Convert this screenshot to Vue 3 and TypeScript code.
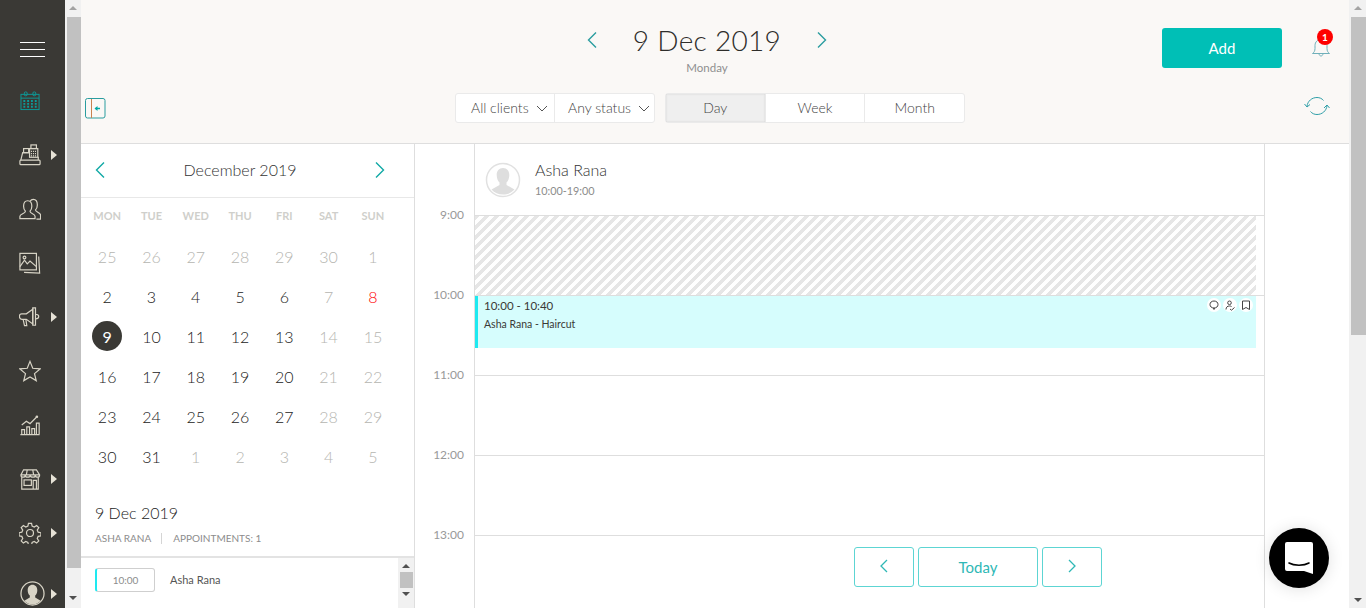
<template>
  <div class="app">
    <aside class="nav">
      <div class="nav__menu">
        <span></span><span></span><span></span>
      </div>
      <div class="nav__item nav__item--active">
        <svg width="21" height="20" viewBox="0 0 22 21" fill="none" stroke="currentColor">
          <rect x="1" y="3.5" width="19" height="16" />
          <path d="M1 7.5h19" />
          <rect x="4.500" y="1" width="3" height="4" rx="1.200" />
          <rect x="13.500" y="1" width="3" height="4" rx="1.200" />
          <path stroke-width="2" stroke-dasharray="2 2" d="M3.500 10.500h15M3.500 13.500h15M3.500 16.500h15" />
        </svg>
      </div>
      <div v-for="item in navItems" :key="item.name" class="nav__item">
        <svg width="22" height="22" viewBox="0 0 24 24" fill="none" stroke="currentColor" stroke-width="1.300">
          <template v-if="item.name === 'till'">
            <rect x="1" y="17.500" width="22" height="5" rx="1" />
            <path d="M2 17.500l2-8h7M21 14v3.500" />
            <rect x="5" y="5" width="5.500" height="4.500" />
            <rect x="13" y="1" width="6" height="4" />
            <rect x="11.500" y="5" width="9" height="9.500" />
            <path d="M13 8h6M13 10.500h6M13 13h6" stroke-dasharray="1.200 1" />
          </template>
          <template v-else-if="item.name === 'clients'">
            <path d="M1 22.500v-2.500c0-2.500 6-3 6-5.500-1.500-1.500-2-3-2-5.500 0-3 1.500-6 4.500-6s4.500 3 4.500 6c0 2.500-.5 4-2 5.500 0 2.500 5.500 3 5.500 5.500v2.500z" />
            <path d="M12 3.500c1-1.500 2.500-2 3.500-2 3 0 4.500 3 4.500 6 0 2.500-.5 4-2 5.500 0 2 5.500 3 5.500 5.500v4.500h-4.500" />
          </template>
          <template v-else-if="item.name === 'gallery'">
            <rect x="1" y="1.500" width="18" height="18" />
            <path d="M1 16l5-7 3 4 3-3 7 6" />
            <circle cx="6" cy="6" r="1.500" />
            <path d="M21.500 5l1 18-17-.8" />
          </template>
          <template v-else-if="item.name === 'marketing'">
            <path d="M15 3.500l-7 5h-5c-1.500 0-2.500 1-2.500 3s1 3 2.500 3h5l7 5z" />
            <path d="M15 2v19h3v-19zM18 9c2 0 3.500 1 3.500 2.500s-1.500 2.500-3.500 2.500" />
            <path d="M4.500 14.500l1.500 7h2.500l-1-7" />
          </template>
          <template v-else-if="item.name === 'reviews'">
            <path d="M12 1.500l3 7.500 8 .7-6.100 5.200 1.900 7.600-6.800-4.100-6.800 4.100 1.900-7.600-6.100-5.200 8-.7z" />
          </template>
          <template v-else-if="item.name === 'reports'">
            <path d="M1.500 22.500h21M3 22v-5h3v5M8.500 22v-8h3v8M14 22v-6h3v6M19 22v-12h3v12" />
            <path d="M3 12l5-4 4 2.500 7-7" />
            <circle cx="19.500" cy="3" r=".8" fill="currentColor" />
          </template>
          <template v-else-if="item.name === 'shop'">
            <path d="M3 10v13h18v-13" />
            <path d="M5 2h14l3.500 5.500c0 1.500-1 2.500-2.200 2.500-1.300 0-2.500-1-2.500-2.500 0 1.500-1 2.500-2.500 2.500s-3-1-3-2.500c0 1.500-1.500 2.500-3 2.500s-2.500-1-2.500-2.500c0 1.500-1.200 2.500-2.500 2.500-1.200 0-2.200-1-2.200-2.500zM1.500 7.500h21M9 2l-1 5.500M15 2l1 5.500" />
            <rect x="5.500" y="13" width="8" height="6" />
            <path d="M15.500 23v-9.500h3.500v9.500" />
          </template>
          <template v-else>
            <circle cx="12" cy="12" r="3.800" />
            <path d="M10.300 1.500h3.400l.6 3 2.300 1 2.600-1.700 2.400 2.400-1.700 2.600 1 2.300 3 .6v3.400l-3 .6-1 2.300 1.700 2.600-2.400 2.400-2.600-1.700-2.300 1-.6 3h-3.400l-.6-3-2.300-1-2.600 1.700-2.400-2.400 1.700-2.600-1-2.300-3-.6v-3.400l3-.6 1-2.300-1.700-2.600 2.400-2.400 2.600 1.700 2.300-1z" />
          </template>
        </svg>
        <i v-if="item.more" class="nav__more"></i>
      </div>
      <div class="nav__user">
        <svg width="25" height="25" viewBox="0 0 26 26">
          <circle cx="13" cy="13" r="12" fill="none" stroke="currentColor" stroke-width="1.300" />
          <path fill="currentColor" d="M13 4c3 0 5 2.400 5 5.500 0 2.500-1 4.500-2.200 5.700v2l5.700 3.300c-2 2.500-5.200 4-8.500 4s-6.500-1.500-8.500-4l5.700-3.300v-2c-1.200-1.200-2.200-3.200-2.200-5.700C8 6.400 10 4 13 4z" />
        </svg>
        <i class="nav__more"></i>
      </div>
    </aside>

    <div class="scrollbar scrollbar--nav">
      <i class="scrollbar__up"></i>
      <div class="scrollbar__thumb"></div>
      <i class="scrollbar__down"></i>
    </div>

    <main class="main">
      <header class="top">
        <div class="top__row">
          <button class="arrow-btn">
            <svg width="12" height="18" viewBox="0 0 12 18" fill="none" stroke="#2a9d9f" stroke-width="1.400"><path d="M10 1.500L2.500 9l7.500 7.500" /></svg>
          </button>
          <div class="top__date">
            <div class="top__title">9 Dec 2019</div>
            <div class="top__day">Monday</div>
          </div>
          <button class="arrow-btn">
            <svg width="12" height="18" viewBox="0 0 12 18" fill="none" stroke="#2a9d9f" stroke-width="1.400"><path d="M2 1.500L9.500 9 2 16.500" /></svg>
          </button>
          <button class="add-btn">Add</button>
          <div class="bell">
            <svg width="20" height="20" viewBox="0 0 20 20" fill="none" stroke="#6fb0ba" stroke-width="1">
              <path d="M1.500 16.500c1.500-1 2.500-2.500 2.500-5v-3c0-3.500 2.500-6 6-6s6 2.500 6 6v3c0 2.500 1 4 2.500 5zM8 16.500c0 1.500 1 2.500 2 2.500s2-1 2-2.500" />
            </svg>
            <span class="bell__badge">1</span>
          </div>
        </div>
        <div class="top__tools">
          <svg class="panel-icon" width="21" height="21" viewBox="0 0 21 21" fill="none" stroke="#2a9d9f">
            <rect x=".5" y=".5" width="19.500" height="19.500" rx="2" />
            <path stroke="#c9824f" d="M6.500 1v19" />
            <path stroke="#00a8a4" stroke-width="1.500" d="M15 10.500h-4.500" />
            <path fill="#00a8a4" stroke="none" d="M9.500 10.500l3-2.500v5z" />
          </svg>
          <div class="filters">
            <div class="filters__item filters__item--clients">All clients<svg width="12" height="7" viewBox="0 0 12 7" fill="none" stroke="#555" stroke-width="1"><path d="M1 1l5 5 5-5" /></svg></div>
            <div class="filters__item filters__item--status">Any status<svg width="12" height="7" viewBox="0 0 12 7" fill="none" stroke="#555" stroke-width="1"><path d="M1 1l5 5 5-5" /></svg></div>
          </div>
          <div class="views">
            <div v-for="view in views" :key="view" class="views__item" :class="{ 'views__item--active': view === activeView }">{{ view }}</div>
          </div>
          <svg class="refresh" width="26" height="20" viewBox="0 0 26 20" fill="none" stroke="#2f9fa8" stroke-width="1">
            <path d="M3 10.500C3.500 5 8 1.500 13 1.500c2.500 0 5 1 6.500 3M23 9.500c-.5 5.500-5 9-10 9-2.500 0-5-1-6.500-3" />
            <path d="M.5 8l2.500 3 3-2.500M20 12l3-3 2.500 3" />
          </svg>
        </div>
      </header>

      <div class="content">
        <section class="cal">
          <div class="cal__head">
            <svg width="12" height="18" viewBox="0 0 12 18" fill="none" stroke="#10a9a5" stroke-width="1.400"><path d="M10 1.500L2.500 9l7.500 7.500" /></svg>
            <span>December 2019</span>
            <svg width="12" height="18" viewBox="0 0 12 18" fill="none" stroke="#10a9a5" stroke-width="1.400"><path d="M2 1.500L9.500 9 2 16.500" /></svg>
          </div>
          <div class="cal__grid">
            <div v-for="d in weekdays" :key="d" class="cal__weekday">{{ d }}</div>
            <div
              v-for="(day, i) in days"
              :key="i"
              class="cal__day"
              :class="{ 'cal__day--muted': day.muted, 'cal__day--red': day.red, 'cal__day--today': day.today }"
            ><span>{{ day.n }}</span></div>
          </div>
          <div class="cal__summary">
            <div class="cal__date">9 Dec 2019</div>
            <div class="cal__meta"><span>ASHA RANA</span><span>APPOINTMENTS: 1</span></div>
          </div>
          <div class="cal__list">
            <div class="cal__entry">
              <span class="cal__time">10:00</span>
              <span class="cal__who">Asha Rana</span>
            </div>
            <div class="scrollbar scrollbar--list">
              <i class="scrollbar__up"></i>
              <div class="scrollbar__thumb"></div>
              <i class="scrollbar__down"></i>
            </div>
          </div>
        </section>

        <section class="day">
          <div class="day__gutter">
            <div v-for="h in hours" :key="h" class="day__hour">{{ h }}</div>
          </div>
          <div class="day__col">
            <div class="staff">
              <svg width="36" height="36" viewBox="0 0 36 36">
                <circle cx="18" cy="18" r="16.500" fill="#fff" stroke="#e1e1e1" stroke-width="1.500" />
                <path fill="#dedede" d="M18 6c4 0 6.300 3.200 6.300 7 0 3.200-1.200 6-2.800 7.500v2.500l8 4.500c-2.900 3.200-7 5-11.500 5s-8.600-1.800-11.500-5l8-4.500v-2.500c-1.600-1.500-2.800-4.300-2.800-7.500 0-3.800 2.300-7 6.300-7z" />
              </svg>
              <div>
                <div class="staff__name">Asha Rana</div>
                <div class="staff__hours">10:00-19:00</div>
              </div>
            </div>
            <div class="slot"><div class="slot__off"></div></div>
            <div class="slot">
              <div class="appt">
                <div class="appt__time">10:00 - 10:40</div>
                <div class="appt__text"><b>Asha Rana</b> - Haircut</div>
                <div class="appt__icons">
                  <i><svg width="10" height="10" viewBox="0 0 10 10" fill="none" stroke="#444"><path d="M5 1c2.500 0 4 1.500 4 3.500S7.500 8 5 8 1 6.500 1 4.500 2.500 1 5 1zM4.500 8l.5 1.500.5-1.500" /></svg></i>
                  <i><svg width="10" height="11" viewBox="0 0 10 11" fill="none" stroke="#444"><circle cx="4.500" cy="2.800" r="1.800" /><path d="M1 9.500c0-2.500 1.500-3.500 3.500-3.500 1 0 1.500.2 2 .5M5 9l1.500 1.200L9.500 7.500" /></svg></i>
                  <i><svg width="10" height="10" viewBox="0 0 10 10" fill="none" stroke="#444"><path d="M1.500 9.500v-8.500h7v8.500L5 7.500z" /></svg></i>
                </div>
              </div>
            </div>
            <div class="slot"></div>
            <div class="slot"></div>
            <div class="slot"></div>
            <div class="today-nav">
              <button>
                <svg width="10" height="14" viewBox="0 0 10 14" fill="none" stroke="#2fb8b6" stroke-width="1.300"><path d="M8 1L2 7l6 6" /></svg>
              </button>
              <button class="today-nav__today">Today</button>
              <button>
                <svg width="10" height="14" viewBox="0 0 10 14" fill="none" stroke="#2fb8b6" stroke-width="1.300"><path d="M2 1l6 6-6 6" /></svg>
              </button>
            </div>
          </div>
          <div class="day__side"></div>
        </section>
      </div>

      <div class="chat">
        <svg width="28" height="32" viewBox="0 0 28 32">
          <path fill="#fff" d="M2 0h24a2 2 0 0 1 2 2v30l-9-3H2a2 2 0 0 1-2-2V2a2 2 0 0 1 2-2z" />
          <path fill="none" stroke="#000" stroke-width="1.600" stroke-linecap="round" d="M4 21c5 3 15 3 20 0" />
        </svg>
      </div>
    </main>

    <div class="scrollbar scrollbar--page">
      <i class="scrollbar__up"></i>
      <div class="scrollbar__thumb"></div>
      <i class="scrollbar__down"></i>
    </div>
  </div>
</template>

<script setup lang="ts">
interface NavItem {
  name: string
  more?: boolean
}

interface CalDay {
  n: number
  muted?: boolean
  red?: boolean
  today?: boolean
}

const navItems: NavItem[] = [
  { name: 'till', more: true },
  { name: 'clients' },
  { name: 'gallery' },
  { name: 'marketing', more: true },
  { name: 'reviews' },
  { name: 'reports' },
  { name: 'shop', more: true },
  { name: 'settings', more: true },
]

const views = ['Day', 'Week', 'Month']
const activeView = 'Day'
const weekdays = ['MON', 'TUE', 'WED', 'THU', 'FRI', 'SAT', 'SUN']
const hours = ['9:00', '10:00', '11:00', '12:00', '13:00']

const days: CalDay[] = []
for (const n of [25, 26, 27, 28, 29, 30, 1]) days.push({ n, muted: true })
for (let n = 2; n <= 31; n++) {
  const col = (n - 2) % 7
  days.push({ n, muted: col >= 5 && n !== 8, red: n === 8, today: n === 9 })
}
for (const n of [1, 2, 3, 4, 5]) days.push({ n, muted: true })
</script>

<style>
html, body { margin: 0; height: 100%; overflow: hidden; }
</style>

<style scoped>
.app {
  display: flex;
  width: 1366px;
  height: 608px;
  overflow: hidden;
  background: #fff;
  color: #3a3935;
  font-family: Lato, "Open Sans", sans-serif;
}

/* sidebar */
.nav {
  flex: 0 0 65px;
  background: #3a3935;
  color: #d8d4c6;
  padding: 42px 0 0;
  box-sizing: border-box;
  overflow: hidden;
}
.nav__menu {
  display: flex;
  flex-direction: column;
  gap: 6px;
  margin-left: 20px;
  width: 25px;
  height: 32px;
}
.nav__menu span { height: 1px; background: #fff; display: block; }
.nav__item {
  position: relative;
  height: 54px;
  width: 60px;
  display: flex;
  align-items: center;
  justify-content: center;
}
.nav__item--active { color: #0d9a98; }
.nav__more {
  position: absolute;
  left: 51px;
  top: 50%;
  margin-top: -5px;
  border-left: 6px solid #e6e2d6;
  border-top: 5px solid transparent;
  border-bottom: 5px solid transparent;
}
.nav__user {
  position: relative;
  width: 65px;
  height: 26px;
  margin-top: 21px;
  display: flex;
  justify-content: center;
}

/* scrollbars */
.scrollbar {
  flex: 0 0 auto;
  width: 16px;
  background: #f1f1f1;
  display: flex;
  flex-direction: column;
  align-items: center;
  position: relative;
}
.scrollbar__up, .scrollbar__down {
  display: flex;
  width: 0;
  height: 0;
  border-left: 4px solid transparent;
  border-right: 4px solid transparent;
  box-sizing: border-box;
}
.scrollbar__up {
  border-bottom: 4px solid #a3a3a3;
  flex: none;
  margin: 6px 0 7px;
}
.scrollbar__down {
  border-top: 4px solid #505050;
  flex: none;
  margin: 7px 0 6px;
}
.scrollbar__thumb {
  background: #c1c1c1;
  width: 14px;
  margin-left: 1px;
}
.scrollbar--nav .scrollbar__thumb { height: 551px; }
.scrollbar--nav .scrollbar__down { margin-top: 28px; }
.scrollbar--page { width: 17px; }
.scrollbar--page .scrollbar__thumb { height: 318px; width: 15px; margin-bottom: 256px; }
.scrollbar--list {
  width: 16px;
  height: 51px;
  margin-left: auto;
}
.scrollbar--list .scrollbar__up { margin: 6px 0 4px; border-bottom-color: #505050; }
.scrollbar--list .scrollbar__down { margin: 4px 0 0; }
.scrollbar--list .scrollbar__thumb { height: 16px; margin-left: 0; width: 13px; }

/* header */
.main {
  flex: 1;
  min-width: 0;
  display: flex;
  flex-direction: column;
  position: relative;
}
.top {
  height: 144px;
  box-sizing: border-box;
  background: #faf8f6;
  border-bottom: 1px solid #dedede;
  flex: none;
}
.top__row {
  display: flex;
  align-items: flex-start;
  height: 93px;
  padding: 0 0 0 505px;
  box-sizing: border-box;
}
.arrow-btn {
  background: none;
  border: 0;
  padding: 0;
  margin-top: 31px;
  width: 12px;
  height: 18px;
}
.top__date {
  width: 218px;
  text-align: center;
  padding-top: 20px;
}
.top__title {
  font-size: 28px;
  line-height: 40px;
  font-weight: 300;
  letter-spacing: .3px;
  color: #2e2d2a;
}
.top__day {
  font-size: 11.500px;
  line-height: 14px;
  margin-top: 1px;
  color: #8f8f8f;
}
.add-btn {
  margin: 28px 0 0 334px;
  width: 120px;
  height: 40px;
  background: #00bfb6;
  border: 0;
  border-radius: 3px;
  color: #fff;
  font: 400 15px Lato, sans-serif;
  padding-bottom: 2px;
}
.bell {
  position: relative;
  margin: 37px 0 0 29px;
  width: 20px;
  height: 20px;
}
.bell__badge {
  position: absolute;
  left: 6px;
  top: -8px;
  width: 16px;
  height: 16px;
  border-radius: 50%;
  background: #fe0000;
  color: #fff;
  font-size: 10px;
  font-weight: 700;
  line-height: 16px;
  text-align: center;
}
.top__tools {
  display: flex;
  align-items: flex-start;
  height: 30px;
}
.panel-icon { margin: 5px 0 0 4px; }
.filters, .views {
  display: flex;
  height: 30px;
  box-sizing: border-box;
  background: #fff;
  border: 1px solid #eaeaea;
  border-radius: 3px;
  font-size: 14px;
  font-weight: 300;
  color: #444;
}
.filters { margin-left: 349px; width: 200px; }
.filters__item {
  display: flex;
  align-items: center;
  gap: 7px;
  line-height: 28px;
}
.filters__item--clients { width: 99px; padding-left: 15px; box-sizing: border-box; border-right: 1px solid #eaeaea; }
.filters__item--status { padding-left: 13px; }
.views { margin-left: 10px; width: 300px; }
.views__item {
  flex: 1;
  text-align: center;
  line-height: 28px;
  border-left: 1px solid #eaeaea;
}
.views__item:first-child { border-left: 0; }
.views__item--active {
  background: #efefef;
  box-shadow: inset 0 0 2px #cfcfcf;
}
.refresh { margin: 3px 0 0 339px; }

/* content */
.content {
  flex: 1;
  min-height: 0;
  display: flex;
}
.cal {
  flex: 0 0 334px;
  box-sizing: border-box;
  border-right: 1px solid #dedede;
  display: flex;
  flex-direction: column;
  overflow: hidden;
}
.cal__head {
  height: 54px;
  flex: none;
  box-sizing: border-box;
  display: flex;
  align-items: center;
  justify-content: space-between;
  padding: 0 28px 2px 13px;
  border-bottom: 1px solid #e8e8e8;
  font-size: 16px;
  font-weight: 300;
  color: #333;
}
.cal__grid {
  display: grid;
  grid-template-columns: repeat(7, 44.300px);
  grid-template-rows: 38px;
  grid-auto-rows: 40px;
  padding-left: 4px;
  padding-bottom: 1px;
  flex: none;
}
.cal__weekday {
  font-size: 11px;
  font-weight: 700;
  color: #cfcfcb;
  text-align: center;
  line-height: 36px;
}
.cal__day {
  display: flex;
  align-items: center;
  justify-content: center;
  font-size: 16px;
  font-weight: 300;
  color: #222;
  height: 40px;
}
.cal__day--muted { color: #b5b5b0; }
.cal__day--red { color: #f00; }
.cal__day--today span {
  width: 30px;
  height: 30px;
  border-radius: 50%;
  background: #3a3935;
  color: #fff;
  font-weight: 400;
  display: flex;
  align-items: center;
  justify-content: center;
}
.cal__summary {
  padding: 26px 0 0 14px;
  flex: none;
  height: 79px;
  box-sizing: border-box;
}
.cal__date { font-size: 16px; line-height: 20px; font-weight: 300; color: #222; }
.cal__meta {
  margin-top: 10px;
  font-size: 10px;
  line-height: 11px;
  color: #8c8c8c;
  display: flex;
}
.cal__meta span + span {
  margin-left: 10px;
  padding-left: 11px;
  border-left: 1px solid #d5d5d5;
}
.cal__list {
  border-top: 2px solid #e3e3e3;
  flex: 1;
  display: flex;
  min-height: 0;
}
.cal__entry {
  display: flex;
  align-items: center;
  padding: 10px 0 0 14px;
  height: 24px;
}
.cal__time {
  box-sizing: border-box;
  width: 60px;
  height: 24px;
  border: 1px solid #cfcfcf;
  border-left: 2px solid #1ee9f0;
  border-radius: 3px;
  font-size: 10px;
  line-height: 22px;
  text-align: center;
  color: #8c8c8c;
}
.cal__who { margin-left: 15px; margin-top: -2px; font-size: 11px; color: #555; }

/* day column */
.day {
  flex: 1;
  min-width: 0;
  display: flex;
  overflow: hidden;
}
.day__gutter {
  flex: 0 0 60px;
  box-sizing: border-box;
  border-right: 1px solid #dedede;
  padding-top: 64px;
  font-size: 12px;
  color: #999;
}
.day__hour {
  height: 80px;
  line-height: 14px;
  text-align: right;
  padding-right: 10px;
}
.day__col {
  flex: 0 0 790px;
  box-sizing: border-box;
  border-right: 1px solid #dedede;
  position: relative;
}
.day__side { flex: 1; }
.staff {
  height: 71px;
  box-sizing: border-box;
  display: flex;
  gap: 14px;
  padding: 18px 0 0 10px;
}
.staff__name { font-size: 16px; line-height: 20px; font-weight: 300; color: #333; margin-top: -2px; }
.staff__hours { font-size: 10.800px; line-height: 14px; margin-top: 4px; color: #8c8c8c; }
.slot {
  height: 80px;
  box-sizing: border-box;
  border-top: 1px solid #dedede;
  position: relative;
}
.slot__off {
  height: 79px;
  margin-right: 8px;
  background-image: linear-gradient(135deg, #e6e6e6 25%, #fff 25%, #fff 50%, #e6e6e6 50%, #e6e6e6 75%, #fff 75%);
  background-size: 10px 10px;
}
.appt {
  position: absolute;
  left: 0;
  right: 8px;
  top: 0;
  height: 52px;
  box-sizing: border-box;
  background: #d6fdfd;
  border-left: 3px solid #1ee9f0;
  padding: 3px 0 0 6px;
  color: #3a3935;
}
.appt__time { font-size: 11.500px; line-height: 14px; }
.appt__text { font-size: 10.500px; line-height: 14px; margin-top: 4px; }
.appt__text b { font-weight: 400; }
.appt__icons {
  position: absolute;
  top: 2px;
  right: 3px;
  display: flex;
  gap: 2px;
}
.appt__icons i {
  width: 14px;
  height: 14px;
  border-radius: 50%;
  background: #fff;
  display: flex;
  align-items: center;
  justify-content: center;
}
.today-nav {
  position: absolute;
  left: 379px;
  top: 403px;
  display: flex;
  gap: 4px;
}
.today-nav button {
  width: 60px;
  height: 40px;
  background: #fff;
  border: 1px solid #5dd5d3;
  border-radius: 3px;
  padding: 0;
  color: #2fb8b6;
  font: 400 15px Lato, sans-serif;
}
.today-nav .today-nav__today { width: 120px; }

.chat {
  position: absolute;
  right: 20px;
  top: 528px;
  width: 60px;
  height: 60px;
  border-radius: 50%;
  background: #000;
  box-shadow: 0 1px 16px rgba(0, 0, 0, .12);
  display: flex;
  align-items: center;
  justify-content: center;
}
</style>
